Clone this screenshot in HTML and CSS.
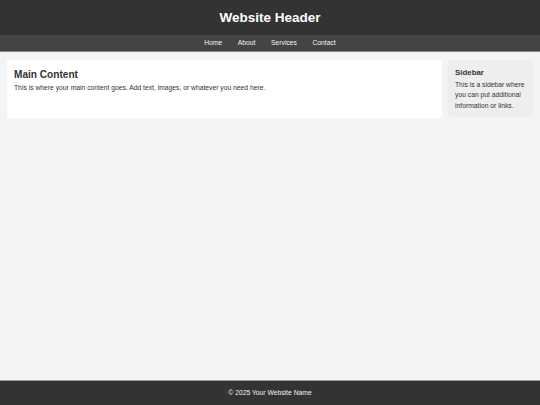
FILE: index.html
```html
<!DOCTYPE html>
<html lang="en">
<head>
<meta charset="utf-8">
<title>Website</title>
<link rel="stylesheet" href="styles.css">
</head>
<body>
<header class="site-header">
  <h1 class="site-title">Website Header</h1>
</header>
<nav class="site-nav">
  <a href="#" class="nav-link">Home</a>
  <a href="#" class="nav-link">About</a>
  <a href="#" class="nav-link">Services</a>
  <a href="#" class="nav-link">Contact</a>
</nav>
<div class="container">
  <main class="main-content">
    <h2 class="main-title">Main Content</h2>
    <p class="main-text">This is where your main content goes. Add text, images, or whatever you need here.</p>
  </main>
  <aside class="sidebar">
    <h3 class="sidebar-title">Sidebar</h3>
    <p class="sidebar-text">This is a sidebar where you can put additional information or links.</p>
  </aside>
</div>
<footer class="site-footer">
  <p class="footer-text">&copy; 2025 Your Website Name</p>
</footer>
</body>
</html>
```
FILE: styles.css
```css
* { box-sizing: border-box; }
html, body { margin: 0; padding: 0; }
body {
  font-family: "Liberation Sans", Arial, sans-serif;
  font-size: 6.75px;
  line-height: 1.6;
  color: #333;
  background: #f4f4f4;
  min-height: 100vh;
  display: flex;
  flex-direction: column;
}
.site-header {
  background: #333;
  color: #fff;
  height: 35px;
  display: flex;
  align-items: center;
  justify-content: center;
}
.site-title {
  margin: 0;
  font-size: 13.5px;
  line-height: 1;
  font-weight: bold;
}
.site-nav {
  background: #444;
  height: 17px;
  padding-top: 1px;
  border-bottom: 1px solid #888;
  display: flex;
  align-items: center;
  justify-content: center;
  gap: 15.5px;
}
.nav-link {
  color: #f2f2f2;
  text-decoration: none;
  font-size: 6.75px;
  line-height: 1;
}
.container {
  flex: 1;
  display: flex;
  gap: 6px;
  padding: 8px 7px;
  align-items: flex-start;
}
.main-content {
  flex: 1;
  background: #fff;
  padding: 8.5px 7px 7px;
  border-radius: 2px;
  align-self: stretch;
  max-height: 58px;
}
.main-title {
  margin: 0 0 3px;
  font-size: 10.1px;
  line-height: 1.15;
}
.main-text {
  margin: 0;
}
.sidebar {
  width: 85px;
  background: #eee;
  padding: 8px 7px 6px;
  border-radius: 2px;
}
.sidebar-title {
  margin: 0 0 2.5px;
  font-size: 7.9px;
  line-height: 1.15;
}
.sidebar-text {
  margin: 0;
  line-height: 1.56;
}
.site-footer {
  background: #333;
  color: #f2f2f2;
  height: 25px;
  border-top: 1px solid #999;
  display: flex;
  align-items: center;
  justify-content: center;
}
.footer-text {
  margin: 0;
  line-height: 1;
}
```
